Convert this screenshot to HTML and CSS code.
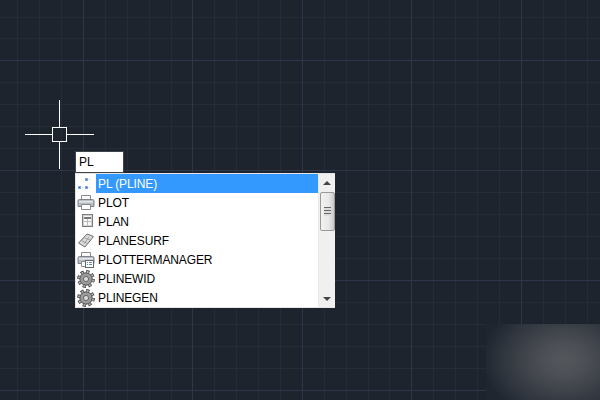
FILE: index.html
```html
<!DOCTYPE html>
<html lang="en">
<head>
<meta charset="utf-8">
<title>Command autocomplete</title>
<link rel="stylesheet" href="styles.css">
</head>
<body>
<main class="canvas">
  <svg class="grid" width="600" height="400" viewBox="0 0 600 400" aria-hidden="true">
    <path class="minor" d="M17 0V400M39 0V400M61 0V400M105 0V400M127 0V400M149 0V400M171 0V400M214 0V400M236 0V400M258 0V400M280 0V400M324 0V400M346 0V400M368 0V400M389 0V400M433 0V400M455 0V400M477 0V400M499 0V400M543 0V400M565 0V400M587 0V400M0 17H600M0 38H600M0 82H600M0 104H600M0 126H600M0 148H600M0 192H600M0 214H600M0 236H600M0 258H600M0 302H600M0 324H600M0 346H600M0 368H600"/>
    <path class="major" d="M83 0V400M192 0V400M302 0V400M411 0V400M521 0V400M0 60H600M0 170H600M0 280H600M0 390H600"/>
    <path class="cross" d="M25 134.500H52M67 134.500H94M59.500 100V127M59.500 142V169"/>
    <rect class="cross" x="52.500" y="127.500" width="14" height="14"/>
  </svg>
  <div class="glare"></div>

  <div class="cmd-input">PL</div>

  <div class="suggest">
    <ul class="items">
      <li class="item active">
        <span class="ico"><svg width="18" height="18" viewBox="0 0 18 18"><path fill="#7fa6ea" d="M8 3h3v3H8zM1 11h3v3H1zM8 11h3v3H8z"/><path fill="#2f5fb8" d="M9 4h1v1H9zM2 12h1v1H2zM9 12h1v1H9z"/><path fill="#c4ccd8" d="M12 4h1v1h-1zM12 12h1v1h-1zM5 12h1v1H5z"/></svg></span>
        <span class="label">PL (PLINE)</span>
      </li>
      <li class="item">
        <span class="ico"><svg width="18" height="18" viewBox="0 0 18 18"><use href="#printer"/></svg></span>
        <span class="label">PLOT</span>
      </li>
      <li class="item">
        <span class="ico"><svg width="18" height="18" viewBox="0 0 18 18"><rect x="5.500" y="1.500" width="10" height="12" fill="#fbfbfb" stroke="#7c7c7c"/><rect x="6.500" y="2.500" width="8" height="10" fill="none" stroke="#cfcfcf"/><path fill="#777" d="M7 4h7v2H7z"/><path fill="#bbb" d="M7 8h7v1H7zM10 6h1v6h-1z"/></svg></span>
        <span class="label">PLAN</span>
      </li>
      <li class="item">
        <span class="ico"><svg width="18" height="18" viewBox="0 0 18 18"><path d="M1.500 11 10 2l6.500 2.500L8 15z" fill="#d8d9d9" stroke="#707070"/><path d="M5 9l5 2M8 6l5 2M7 12l5-7M4 9l5-6" stroke="#8d8d8d" fill="none" stroke-width=".7"/></svg></span>
        <span class="label">PLANESURF</span>
      </li>
      <li class="item">
        <span class="ico"><svg width="18" height="18" viewBox="0 0 18 18"><use href="#printer"/><rect x="8.500" y="9.500" width="8" height="7" fill="#fff" stroke="#666"/><path fill="#5d86b5" d="M10 11h1v1h-1zM10 13h1v1h-1zM12 11h3v1h-3zM12 13h3v1h-3z"/></svg></span>
        <span class="label">PLOTTERMANAGER</span>
      </li>
      <li class="item">
        <span class="ico"><svg width="18" height="18" viewBox="0 0 18 18"><use href="#gear"/></svg></span>
        <span class="label">PLINEWID</span>
      </li>
      <li class="item">
        <span class="ico"><svg width="18" height="18" viewBox="0 0 18 18"><use href="#gear"/></svg></span>
        <span class="label">PLINEGEN</span>
      </li>
    </ul>
    <div class="scrollbar">
      <span class="arrow up"></span>
      <span class="thumb"><span class="grip"></span></span>
      <span class="arrow down"></span>
    </div>
  </div>

  <svg class="defs" width="0" height="0" aria-hidden="true">
    <defs>
      <symbol id="printer" viewBox="0 0 18 18">
        <path d="M4.500 1.500h9v5h-9z" fill="#fafafa" stroke="#8a8a8a"/>
        <path d="M2.500 5.500h13a1.500 1.500 0 0 1 1.500 1.500v5.500H1V7a1.500 1.500 0 0 1 1.500-1.500z" fill="#b9bec4" stroke="#7d828a"/>
        <path fill="#e4e7ea" d="M2 7h14v1.500H2z"/>
        <path d="M4.500 10.500h9v5h-9z" fill="#fff" stroke="#8a8a8a"/>
      </symbol>
      <symbol id="gear" viewBox="0 0 18 18">
        <circle cx="9" cy="9" r="7.200" fill="none" stroke="#4a4a4a" stroke-width="3.400" stroke-dasharray="3.200 2.450"/>
        <circle cx="9" cy="9" r="6.200" fill="#9c9c9c" stroke="#4a4a4a"/>
        <circle cx="9" cy="9" r="7.200" fill="none" stroke="#bdbdbd" stroke-width="1.600" stroke-dasharray="1.800 3.850" stroke-dashoffset="-.7"/>
        <circle cx="9" cy="9" r="2.600" fill="#d8d8d8" stroke="#666"/>
      </symbol>
    </defs>
  </svg>
</main>
</body>
</html>
```
FILE: styles.css
```css
* { box-sizing: border-box; }
html, body { margin: 0; padding: 0; }
body { width: 600px; height: 400px; overflow: hidden; background: #1d242e; font-family: "Liberation Sans", Arial, sans-serif; }
.canvas { position: relative; width: 600px; height: 400px; overflow: hidden; }
.grid { position: absolute; left: 0; top: 0; display: block; }
.grid path, .grid rect { fill: none; shape-rendering: crispEdges; }
.minor { stroke: #252b37; stroke-width: 1; }
.major { stroke: #30364a; stroke-width: 1; }
.cross { stroke: #fff; stroke-width: 1; }
.glare {
  position: absolute; left: 486px; top: 324px; width: 114px; height: 76px;
  background: radial-gradient(ellipse 82px 62px at 78px 36px, #54575c 0%, #4b4e54 28%, #363b43 65%, #1f2630 100%);
}
.defs { position: absolute; }
.cmd-input {
  position: absolute; left: 75px; top: 151px; width: 49px; height: 22px;
  background: #fff; border: 1px solid #404448; padding: 0 3px;
  font-size: 12px; line-height: 20px; color: #000;
}
.suggest {
  position: absolute; left: 75px; top: 173px; width: 260px; height: 135px;
  background: #fff; border: 1px solid #e4e4e4; border-right: 0; display: flex;
}
.items { list-style: none; margin: 0; padding: 0; flex: 1; min-width: 0; }
.item { display: flex; height: 19px; align-items: center; }
.ico { flex: none; width: 20px; height: 19px; padding: 0 0 0 1px; display: flex; align-items: center; background: #fff; }
.ico svg { display: block; }
.label { flex: 1; height: 19px; padding: 1px 0 0 2px; font-size: 12px; line-height: 19px; letter-spacing: -0.12px; color: #000; }
.active .label { background: #3399ff; color: #fff; }
.scrollbar { flex: none; width: 17px; background: #f0f0f0; border-left: 1px solid #e8e8e8; position: relative; display: flex; flex-direction: column; align-items: center; }
.arrow { width: 0; height: 0; border-left: 4px solid transparent; border-right: 4px solid transparent; }
.up { border-bottom: 4px solid #444; margin-top: 7px; }
.down { border-top: 4px solid #444; margin-top: 66px; }
.thumb { margin-top: 7px; width: 15px; height: 39px; border: 1px solid #9a9a9a; border-radius: 2px; background: linear-gradient(90deg, #f2f2f2, #e8e8e8 60%, #c8c8c8); display: flex; align-items: center; justify-content: center; }
.grip { width: 7px; height: 9px; background: repeating-linear-gradient(180deg, #666 0 1px, #ddd 1px 3px); }
```
